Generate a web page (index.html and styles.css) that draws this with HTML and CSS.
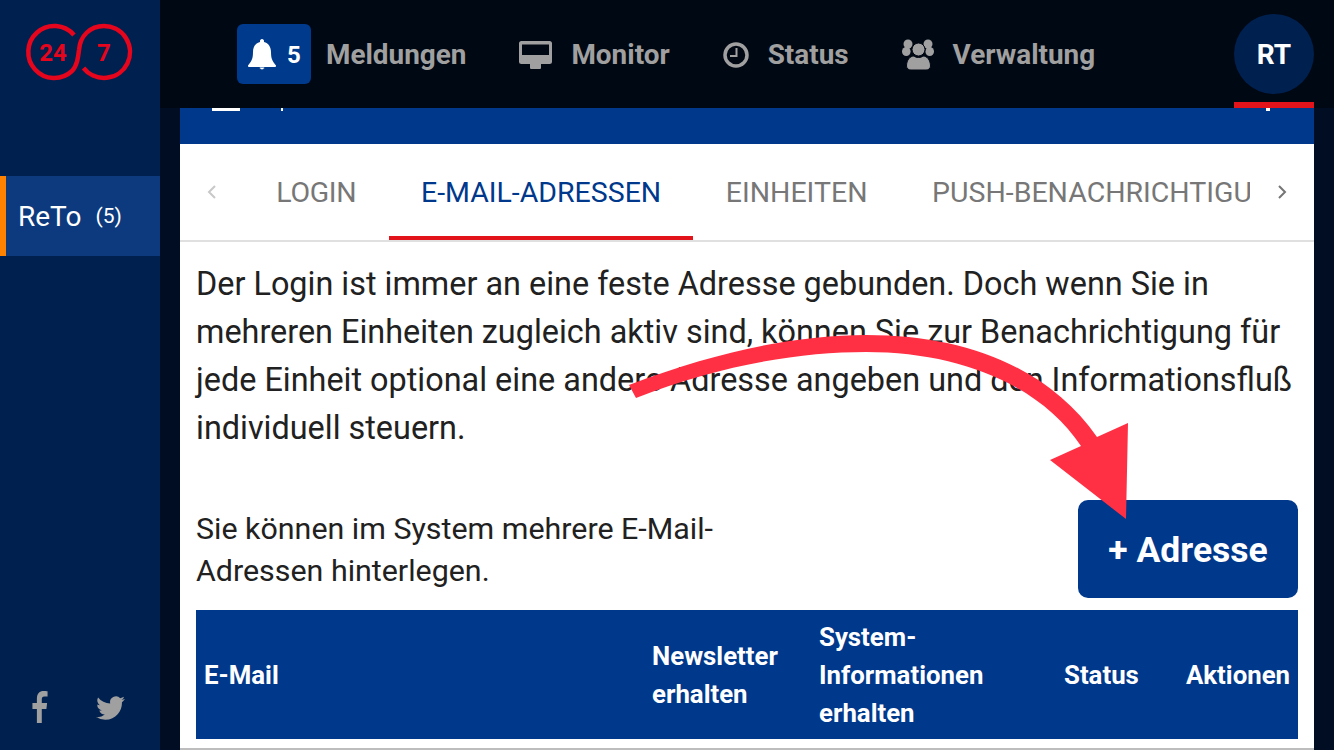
FILE: index.html
```html
<!DOCTYPE html>
<html lang="de">
<head>
<meta charset="utf-8">
<title>Adressen</title>
<link rel="stylesheet" href="styles.css">
</head>
<body>
<div class="app">
  <aside class="sidebar">
    <div class="logo">
      <svg width="160" height="108" viewBox="0 0 160 108">
        <path class="logo-line" d="M74 35A26 26 0 1 0 72 71C77 66 78 58 79 50C80 36 90 26 104 26A26 26 0 1 1 83.500 68"/>
        <text class="logo-text" x="53" y="61" text-anchor="middle">24</text>
        <text class="logo-text" x="104" y="61" text-anchor="middle">7</text>
      </svg>
    </div>
    <nav class="side-nav">
      <a class="side-item"><span class="side-name">ReTo</span><span class="side-count">(5)</span></a>
    </nav>
    <div class="social">
      <svg class="fb" width="16" height="32" viewBox="0 0 18 32" preserveAspectRatio="none"><path d="M5.500 32V18H.5v-6h5V7.500C5.500 2.500 8.500 0 13 0c1.500 0 3.500.2 4.500.3v5.200H14c-2.300 0-3 1.200-3 3V12h6l-.8 6H11v14z"/></svg>
      <svg class="tw" width="29" height="24" viewBox="0 2 24 20"><path d="M23.953 4.570a10 10 0 01-2.825.775 4.958 4.958 0 002.163-2.723c-.951.555-2.005.959-3.127 1.184a4.920 4.920 0 00-8.384 4.482C7.690 8.095 4.067 6.130 1.640 3.162a4.822 4.822 0 00-.666 2.475c0 1.710.870 3.213 2.188 4.096a4.904 4.904 0 01-2.228-.616v.060a4.923 4.923 0 003.946 4.827 4.996 4.996 0 01-2.212.085 4.936 4.936 0 004.604 3.417 9.867 9.867 0 01-6.102 2.105c-.390 0-.779-.023-1.170-.067a13.995 13.995 0 007.557 2.209c9.053 0 13.998-7.496 13.998-13.985 0-.210 0-.420-.015-.630A9.935 9.935 0 0024 4.590z"/></svg>
    </div>
  </aside>
  <div class="right">
    <header class="topbar">
      <div class="badge">
        <svg width="28" height="31" viewBox="0 0 28 31"><path d="M14 0c1.300 0 2 1 2 2v1C20.500 4 23 8 23 13c0 6 1 9 5 13.500.4.800 0 1.500-1 1.500H1c-1 0-1.400-.7-1-1.500C4 22 5 19 5 13 5 8 7.500 4 12 3V2c0-1 .7-2 2-2z"/><path class="clapper" d="M11.500 28.500a2.500 2.500 0 0 0 5 0"/></svg>
        <span>5</span>
      </div>
      <a class="nav-item nav-first">Meldungen</a>
      <a class="nav-item">
        <svg width="33" height="28" viewBox="0 0 33 28"><path fill-rule="evenodd" d="M2.500 0h28A2.500 2.500 0 0 1 33 2.500v18a2.500 2.500 0 0 1-2.500 2.500H22v3.500c0 1-.5 1.500-1.500 1.500h-8c-1 0-1.500-.5-1.500-1.500V23H2.500A2.500 2.500 0 0 1 0 20.500v-18A2.500 2.500 0 0 1 2.500 0zM3 3.500V14h27V3.500z"/></svg>
        Monitor
      </a>
      <a class="nav-item">
        <svg width="26" height="26" viewBox="0 0 26 26"><circle class="clock" cx="13" cy="13" r="11"/><path class="hands" d="M13.500 6v8H7"/></svg>
        Status
      </a>
      <a class="nav-item">
        <svg width="32" height="31" viewBox="0 0 32 31"><circle cx="6" cy="5" r="4.500"/><circle cx="26" cy="5" r="4.500"/><ellipse cx="4.300" cy="12.500" rx="4.300" ry="4.500"/><ellipse cx="27.700" cy="12.500" rx="4.300" ry="4.500"/><path class="cut" d="M4.500 27C4.500 21 8 17 12 17c2 2 7 2 9 0 4 0 7.500 4 7.500 10 0 3-2.500 4-4.500 4H9c-2 0-4.500-1-4.500-4z"/><circle class="cut" cx="16.500" cy="10.500" r="6.500"/></svg>
        Verwaltung
      </a>
      <div class="user">
        <div class="avatar">RT</div>
        <div class="user-bar"></div>
      </div>
    </header>
    <main class="content">
      <section class="card">
        <div class="card-head">
          <span class="mark-a"></span><span class="mark-b"></span><span class="mark-c"></span>
        </div>
        <div class="tabs">
          <span class="chev chev-off"><svg width="10" height="14" viewBox="0 0 10 14"><path d="M8 1L2 7l6 6"/></svg></span>
          <div class="tab-list">
            <a class="tab tab-first">LOGIN</a>
            <a class="tab tab-active">E-MAIL-ADRESSEN</a>
            <a class="tab">EINHEITEN</a>
            <a class="tab">PUSH-BENACHRICHTIGUNGEN</a>
          </div>
          <span class="chev"><svg width="10" height="14" viewBox="0 0 10 14"><path d="M2 1l6 6-6 6"/></svg></span>
        </div>
        <div class="body">
          <p class="intro">Der Login ist immer an eine feste Adresse gebunden. Doch wenn Sie in mehreren Einheiten zugleich aktiv sind, können Sie zur Benachrichtigung für jede Einheit optional eine andere Adresse angeben und den Informationsfluß individuell steuern.</p>
          <div class="action-row">
            <p class="hint">Sie können im System mehrere E-Mail-Adressen hinterlegen.</p>
            <button class="add-btn">+ Adresse</button>
          </div>
          <div class="table-head">
            <div>E-Mail</div>
            <div>Newsletter erhalten</div>
            <div>System-Informationen erhalten</div>
            <div>Status</div>
            <div>Aktionen</div>
          </div>
        </div>
      </section>
    </main>
  </div>
</div>
<svg class="arrow" width="1334" height="750" viewBox="0 0 1334 750"><path d="M629 385C720 350 800 335 866 335C970 335 1050 370 1097 437L1128 423L1126 519L1050 460L1081 446C1040 385 960 352 866 352C800 352 720 365 636 398Z"/></svg>
</body>
</html>
```
FILE: styles.css
```css
* { box-sizing: border-box; }
html, body { margin: 0; height: 100%; overflow: hidden; }
body { font-family: Roboto, "Liberation Sans", sans-serif; background: #000d22; }
a { text-decoration: none; }
p { margin: 0; }

.app { display: flex; width: 1334px; height: 750px; }

.sidebar { width: 160px; flex: none; background: #00204f; display: flex; flex-direction: column; }
.logo { height: 108px; }
.logo svg { display: block; }
.logo-line { fill: none; stroke: #e5051c; stroke-width: 4.500; }
.logo-text { fill: #e5051c; font: 700 24px Roboto, sans-serif; }
.side-nav { margin-top: 68px; flex: 1; }
.side-item { display: flex; align-items: center; gap: 14px; height: 80px; padding-left: 12px; background: #0d3a7e; border-left: 6px solid #ff8200; color: #fff; }
.side-name { font-size: 28px; }
.side-count { font-size: 21px; }
.social { display: flex; align-items: flex-start; gap: 48px; padding: 7px 0 0 32px; height: 66px; }
.social svg { fill: #a0a0a0; display: block; }
.tw { margin-top: 5px; }

.right { flex: 1; display: flex; flex-direction: column; min-width: 0; }
.topbar { height: 108px; flex: none; background: #000814; display: flex; align-items: center; padding-left: 77px; position: relative; }
.badge { width: 74px; height: 60px; background: #003a8c; border-radius: 6px; display: flex; align-items: center; gap: 11px; padding-left: 11px; color: #fff; font-weight: 700; font-size: 24px; }
.badge svg { fill: #fff; display: block; }
.badge span { padding-top: 2px; }
.clapper { fill: #fff; stroke: #003a8c; stroke-width: 1; }
.nav-item { display: flex; align-items: center; gap: 19px; color: #a0a0a0; font-weight: 700; font-size: 27.900px; margin-left: 53px; padding-top: 1px; }
.nav-item svg { fill: #a0a0a0; display: block; }
.nav-first { margin-left: 15px; }
.clock { fill: none; stroke: #a0a0a0; stroke-width: 3.500; }
.hands { fill: none; stroke: #a0a0a0; stroke-width: 2; }
.cut { stroke: #000814; stroke-width: 1; }
.user { position: absolute; right: 20px; top: 14px; width: 80px; height: 94px; }
.avatar { width: 80px; height: 80px; border-radius: 50%; background: #00204f; color: #fff; font-weight: 700; font-size: 28px; display: flex; align-items: center; justify-content: center; }
.user-bar { position: absolute; left: 0; right: 0; bottom: 0; height: 6px; background: #e3131c; }

.content { flex: 1; padding: 0 20px; min-height: 0; overflow: hidden; }
.card { background: #fff; height: 100%; border-bottom: 2px solid #bdbdbd; }
.card-head { height: 36px; background: #00388c; display: flex; align-items: flex-start; padding-left: 32px; }
.mark-a { width: 28px; height: 3px; background: #fff; }
.mark-b { width: 2px; height: 3px; background: #fff; margin-left: 41px; }
.mark-c { width: 4px; height: 3px; background: #fff; margin-left: auto; margin-right: 44px; }

.tabs { height: 98px; display: flex; border-bottom: 2px solid #e0e0e0; }
.chev { width: 64px; flex: none; display: flex; align-items: center; justify-content: center; height: 96px; }
.chev svg { display: block; fill: none; stroke: #757575; stroke-width: 2; }
.chev-off svg { stroke: #c8c8c8; }
.tab-list { flex: 1; min-width: 0; display: flex; overflow: hidden; }
.tab { flex: none; height: 96px; padding: 4px 32.300px 0; display: flex; align-items: center; font-size: 28.500px; color: #777; border-bottom: 4px solid transparent; }
.tab-first { letter-spacing: -.3px; }
.tab-active { color: #00388c; border-bottom-color: #e3131c; }

.body { padding: 18px 16px 0; }
.intro { font-size: 32.400px; line-height: 48px; color: #212121; }
.action-row { display: flex; justify-content: space-between; align-items: flex-start; margin-top: 48px; }
.hint { width: 540px; font-size: 30.400px; line-height: 42px; color: #212121; padding-top: 8px; }
.add-btn { width: 220px; height: 98px; border: 0; padding: 2px 0 0; border-radius: 10px; background: #00388c; color: #fff; font: 700 35.500px Roboto, sans-serif; }
.table-head { margin-top: 12px; height: 129px; background: #00388c; color: #fff; font-weight: 700; font-size: 25.800px; line-height: 38px; display: grid; grid-template-columns: 448px 167px 245px 122px 120px; align-items: center; }
.table-head div { padding: 0 8px; }

.arrow { position: absolute; left: 0; top: 0; pointer-events: none; }
.arrow path { fill: #ff3044; }
```
